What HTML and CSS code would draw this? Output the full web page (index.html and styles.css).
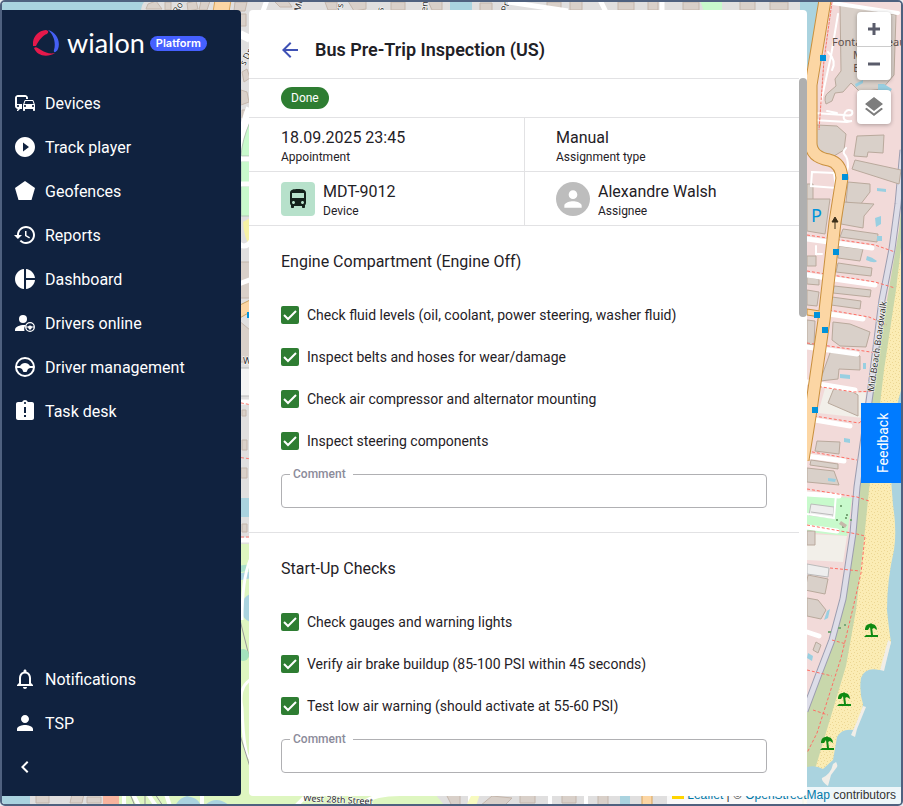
FILE: index.html
```
<!DOCTYPE html>
<html lang="en">
<head>
    <meta charset="UTF-8">
    <meta name="viewport" content="width=device-width, initial-scale=1.0">
    <title>Bus Pre-Trip Inspection (US)</title>
    <link rel="stylesheet" href="styles.css">
</head>
<body>
    <div class="app">
        <!-- map -->
        <svg class="map" viewBox="2 2 899 802" preserveAspectRatio="xMaxYMin slice" aria-hidden="true">
            <defs>
                <pattern id="sand" width="6" height="6" patternUnits="userSpaceOnUse">
                    <rect width="6" height="6" fill="#fbecb4"/>
                    <path d="M1 1h1v1h-1zM4 2h1v1h-1zM2 4h1v1h-1zM5 5h1v1h-1z" fill="#ecd794"/>
                </pattern>
                <g id="umbrella" fill="#0f8a12">
                    <path d="M-6 0C-6-4-4-6-1-6L0-7 1-6C4-6 6-3 6 0L3-2 1-1-1-3-3 0z"/>
                    <path d="M-1-3l2 0 1 8h5v2h-14l2-2h5z"/>
                </g>
            </defs>
            <rect width="903" height="806" fill="#e0dfdf"/>

            <!-- top edge -->
            <path d="M0 0h146q-5 4-5 12H0z" fill="#aad3df"/>
            <path d="M215 0h16l-2 12h-16z" fill="#fcd6a4" stroke="#d9a458"/>
            <g fill="#d9d0c9" stroke="#c4b6ab">
                <path d="M148 4l8-3 6 8h-16zM165 2h6v8h-6zM187 3l9-2 2 8-10 2zM201 1h9l-3 9h-8zM235 2h12l-2 9h-11zM274 1h14l4 6h-12zM325 2h12v8h-9zM348 1h18v8l-12 2zM391 2h14v8h-14zM428 1h14v9h-10zM480 3h12v8h-12zM547 2h14v8h-14zM570 1h12v9h-12zM618 2h16v8h-16zM648 1h10v9h-10zM683 2h16v8h-16zM740 1h15v9h-15zM770 2h18v8h-18z"/>
            </g>
            <path d="M450 0h22v12h-22zM800 0h16l-8 60h-8z" fill="#aad3df"/>
            <path d="M700 0h22v12h-18z" fill="#c8facc"/>
            <path d="M262 14l5-14M508 2l60 9M600 0l6 12M662 0v12" stroke="#fff" stroke-width="5" fill="none"/>
            <g class="map-street">
                <text transform="translate(178 14) rotate(-62)">Ro</text>
                <text transform="translate(300 12) rotate(-75)">Mi</text>
                <text transform="translate(342 12) rotate(-80)">rs</text>
                <text transform="translate(383 12) rotate(-80)">s</text>
                <text transform="translate(427 12) rotate(-85)">en</text>
                <text transform="translate(507 12) rotate(-75)">Pr</text>
            </g>

            <!-- gap between the sidebar and the panel -->
            <g fill="#d9d0c9" stroke="#c4b6ab">
                <path d="M238 14h8v12h-8zM242 72l5-3 3 9-6 4zM241 90l6 2 2 10-8 3zM242 110h5v8h-5zM238 262h12v36h-12zM238 320l12 10v32h-12zM242 410h4v6h-4zM242 440h5v10h-5zM241 468h6v10h-6zM242 524h5v8h-5z"/>
            </g>
            <path d="M240 34l10 5M250 108q-8 20-14 60" stroke="#fff" stroke-width="8" fill="none"/>
            <path d="M250 122q-8 18-9 34h9zM241 161h9v22h-9zM241 186h9v30h-9z" fill="#c8facc" stroke="#b5c8b7"/>
            <path d="M243 222l7-4v28q-6-8-7-24z" fill="#f7f2a5"/>
            <path d="M236 159h16M236 184h16M236 240q8 12 16 0M236 285l16-6M236 402h16M236 540h16" stroke="#fff" stroke-width="5" fill="none"/>
            <path d="M236 368h16v28h-16z" fill="#f4f4f4" stroke="#bbb"/>
            <path d="M238 306l12-6v12l-12 7z" fill="#fcd6a4" stroke="#c9a260"/>
            <path d="M247 312h5v6h-5z" fill="#0092da"/>
            <path d="M236 402l16 3M236 457l16 2M236 537h16" stroke="#fa7b72" stroke-dasharray="3 2" fill="none"/>
            <path d="M236 498h16v19h-16z" fill="#aad3df"/>
            <path d="M236 544h16v262h-16z" fill="#def6c0"/>
            <path d="M236 566l16-2v6l-16 3z" fill="#aae0cb"/>
            <path d="M236 574l16-3v7l-16 3zM250 594q-9 4-9 14t9 14z" fill="#aad3df"/>
            <path d="M250 560q-8 20-8 60M250 680q-12 8-8 28 2 50 8 50" stroke="#fff" stroke-width="3" fill="none"/>
            <path d="M240 620l10 40M240 735l10 32" stroke="#999"/>
            <circle cx="243" cy="655" r="6" fill="#a3e2bd"/>
            <g class="map-street">
                <text transform="translate(245 66) rotate(-62)">s Dr</text>
                <text x="243" y="364">W 41st</text>
            </g>

            <!-- bottom edge -->
            <path d="M0 794h30v12H0zM620 794h10v12h-10z" fill="#aad3df"/>
            <path d="M103 794h16v12h-16z" fill="#f8b39d"/>
            <path d="M119 794h316l10 12H119z" fill="#def6c0"/>
            <path d="M175 806q4-8 12-10 12 2 14 10zM204 806q12-12 26 0z" fill="#aad3df"/>
            <path d="M36 795h13v8H36zM72 794h12l-2 9H70zM87 797h14v6H87zM446 794h14v12h-8zM480 806l12-10 20 2-8 8zM520 795h15v8h-15zM562 795h14v8h-14zM598 794h10v11h-10z" fill="#d9d0c9" stroke="#c4b6ab"/>
            <path d="M124 794v12M133 794l6 12M148 794l8 12M166 794l4 12M202 794v12M296 806l10-10M400 794q-30 0-40 12M470 794v12M550 794v12M586 794v12" stroke="#fff" stroke-width="4" fill="none"/>
            <path d="M130 794l5 12M145 794v12M155 794l8 12" stroke="#999"/>
            <path d="M642 794h10v12h-10z" fill="#fcd6a4" stroke="#d9a458"/>
            <path d="M472 794h8l-4 12h-10z" fill="#f7fabf"/>
            <text class="map-street" transform="translate(303 801) rotate(3)">West 28th Street</text>

            <!-- beach side -->
            <path d="M807 0h96v806h-96z" fill="#f2dad9"/>
            <path d="M807 0h14l-14 70z" fill="#aad3df"/>
            <path d="M807 494l45 4-5 38-40-4z" fill="#c8facc"/>
            <path d="M807 534l40 2-4 26-36-2zM826 385l40 8-3 25-45-5z" fill="#f2efe9"/>
            <path d="M903 190l-4 40-12 70-18 100-13 95-12 100-10 42-18 40-14 38v98h116V190z" fill="#c8d7ab"/>
            <path d="M903 230l-7 60-12 80-7 60-8 60-5 50-8 70-10 56-12 40-18 60-12 25v20h86l16-190z" fill="url(#sand)"/>
            <path d="M903 385q-6 15-10 45-4 35 0 75 4 25 1 45-7 30-7 60 2 20 4 32l-5 18q-2 10-7 10-14-3-18 8-2 14 2 26-1 15-10 26-11-2-16 7-2 12-4 23l-10 9q-7-4-16-2v40h96z" fill="#aad3df"/>
            <path d="M888 640l3 2-7 29-4-1zM863 706l3 1-9 22-2 8-4-2 4-9zM836 762q2 3 1 5l-6 8-3 11q-7-5-6-8 9-4 11-14z" fill="#f1eee8"/>
            <path d="M903 150l-5 54-6 45-10 51-11 87-14 100-4 46-10 66-11 41-15 39-12 32" fill="none" stroke="#9b9caf" stroke-width="7"/>
            <path d="M903 150l-5 54-6 45-10 51-11 87-14 100-4 46-10 66-11 41-15 39-12 32" fill="none" stroke="#dddde8" stroke-width="5"/>

            <g fill="#d9d0c9" stroke="#b9a99c">
                <path d="M840 5l32 5 24 5-2 60-12 14-22 3-9-9-8 9-8 1-3 8-6 3q-3-8 3-12l7-6-1-7 6-8z"/>
                <path d="M817 125l20 1 9 8-2 16-10 6-16-1-5-6 1-18z"/>
                <path d="M857 136l27-1-1 18-15-1-1 5-13-1z"/>
                <path d="M855 160l46 10-2 14-47-15zM848 182l22 2v8l-10 13-14-3zM807 184h6v16h-6z"/>
                <path d="M807 199h23l-5 35-18-3zM843 202l31 2-10 12-1 12-22-4zM843 229l35 5-1 8-37-5zM839 246l24 3-3 12-22-3zM838 263l34 5-1 8-35-4zM834 286l37 4-1 7-37-4zM832 297l29 4-1 8-29-4z"/>
                <path d="M807 256h9v10h-9zM807 277l12 2v6l-12-1zM807 290l12 2-2 14-10-1z"/>
                <path d="M833 322l17 2 20 8-4 15-26-1-8-6zM807 320l8 1-1 24-7-1zM831 350l7 1 22 5v14l-21-1-1 10-18 2zM834 388l17 3 7 4v21l-30-13z"/>
                <path d="M817 441l23 1-1 12-24-3zM811 460l27 4v5l-28-4zM807 468l27 3 5 14-32-3zM807 531h8v14h-8zM808 575l20 4-3 15-20-4zM807 598l11 2 8 10-5 9-14-3zM816 642l5 3-3 8-5-3z"/>
            </g>
            <path d="M811 504l23 3-1 11-24-3zM811 512l22 3" fill="#ededed" stroke="#bbb"/>
            <path d="M807 564l22 4-1 9-21-3z" fill="#eee" stroke="#bbb"/>
            <path d="M878 84l6 0 8 5-2 3h-12zM855 84l8-4v3l-7 4zM875 218l6-2v8l-5 3zM877 236h5v5h-5zM867 256q5 1 10 5-2 3-11-1zM840 374l10 1v4l-10-1zM863 363h3v6h-3zM844 438l6 1v4l-6-1zM828 478l8 1-1 3-7-1zM827 611l3-2-2 9-4 2zM808 653l5 3-1 5-5-3zM877 188l9 1v3l-9-1z" fill="#99cfe1"/>

            <!-- side streets -->
            <g stroke="#fff" stroke-width="5" stroke-linecap="round" fill="none">
                <path d="M807 239l65 9M807 275l68 10M829 314l34 5M807 347l50 7M807 382l48 8M815 420l35 6M807 456l37 5M807 494l32 2M807 527l30 4M807 632l12 4"/>
                <g stroke-width="2">
                    <path stroke-width="4" d="M833 3l65 10"/>
                    <path d="M838 14l-7 42-10 46M828 52q9 9 4 18M814 113l30 2q10 2 8-4-6-3-8 4t8 6l-5 1-34-2M827 111l10 2"/>
                    <path d="M812 172l22 1 2 15-25-2zM846 148q-4 4-1 7t3 12l-2 8M839 228v10M836 494l-2 24-27-4M816 246v8h6"/>
                </g>
            </g>
            <g stroke="#ff6f65" stroke-width="1" stroke-dasharray="3 2" fill="none">
                <path d="M807 235l68 10 20 7M807 271l68 11 20 6M829 310l40 7 18 8M807 343l50 7 20 3M809 385l45 7 20-1M814 416l45 7 5-4M807 451l50 9M807 489l50 8 12 4M807 525l50 9 8 2-4 37-8 35-12 50-24 75-10 20M830 568l30 3M807 670l25 6M813 710l15 5M832 640l14 4"/>
            </g>

            <!-- main road -->
            <path d="M825 0l-14 85v58q0 14 18 17 12 3 13 18l-7 44-11 98-13 90-8 50" fill="none" stroke="#c9903d" stroke-width="13"/>
            <path d="M807 309l13 2v6l-13-2z" fill="#fcd6a4" stroke="#c9903d"/>
            <path d="M825 0l-14 85v58q0 14 18 17 12 3 13 18l-7 44-11 98-13 90-8 50" fill="none" stroke="#fcd6a4" stroke-width="11"/>
            <path d="M832 2l-8 58-5 70" fill="none" stroke="#f7756a" stroke-dasharray="3 1"/>
            <path d="M835 229v-9M835 217l-3 5h6z" stroke="#3d301b" fill="#3d301b"/>
            <path d="M820 55h6v6h-6zM842 174h6v6h-6zM833 249h6v6h-6zM814 312h6v6h-6zM822 327h6v6h-6zM812 407h6v6h-6z" fill="#0092da"/>
            <path d="M840 506h2M846 515h2M842 527h2M850 520h2M828 632h3M838 628h3M844 625h2M845 518h2M836 520h2" stroke="#79a878" stroke-width="2"/>
            <path d="M841 521l6 4-2 3-6-4z" fill="#c6b8aa"/>
            <use href="#umbrella" x="871" y="630"/>
            <use href="#umbrella" x="844" y="699"/>
            <use href="#umbrella" x="827" y="743"/>
            <text class="map-parking" x="811" y="222">P</text>
            <g class="map-place">
                <text x="869" y="46">Fontainebleau</text>
                <text x="869" y="59">Miami</text>
                <text x="869" y="72">Beach</text>
            </g>
            <text class="map-street" transform="translate(874 392) rotate(-82)">Mid Beach Boardwalk</text>
        </svg>
        <div class="attribution">
            <svg viewBox="0 0 12 8" width="12" height="8"><path fill="#4c7be1" d="M0 0h12v4H0z"/><path fill="#ffd500" d="M0 4h12v4H0z"/></svg>
            <a href="#">Leaflet</a> | © <a href="#">OpenStreetMap</a> contributors
        </div>

        <!-- sidebar -->
        <aside class="sidebar">
            <div class="logo">
                <svg class="logo-mark" viewBox="0 0 26 26">
                    <path fill="#e5194b" d="M13 0q4 1 1 4C10 5 6 10 3 16l-3 0C-1 8 4 1 13 0z"/>
                    <path fill="#4560f5" d="M15 0c8 2 13 11 10 19-2 4-5 4-4 1C23 13 21 5 15 0z"/>
                    <path fill="#e5194b" d="M1 18c2-2 4 0 7 2 5 3 9 4 14 3C14 28 4 26 1 18z"/>
                </svg>
                <span class="logo-name">wialon</span>
                <span class="logo-badge">Platform</span>
            </div>
            <nav class="menu">
                <a class="menu-item" href="#">
                    <svg viewBox="0 0 24 24"><path d="M12 4H5C3.340 4 2 5.340 2 7v8c0 1.660 1.340 3 3 3l-1 1v1h1l2-2.030L9 18v-5H4V5.980L13 6v2h2V7c0-1.660-1.340-3-3-3zM5 14c.550 0 1 .450 1 1s-.450 1-1 1-1-.450-1-1 .450-1 1-1zm15.570-4.340c-.140-.400-.520-.660-.970-.660h-7.190c-.460 0-.830.260-.980.660L10 13.770l.010 5.510c0 .380.310.720.690.720h.620c.380 0 .680-.380.680-.760V18h8v1.240c0 .380.310.760.690.760h.610c.380 0 .690-.340.690-.720l.010-1.370v-4.140l-1.430-4.110zm-8.160.340h7.190l1.030 3h-9.250l1.030-3zM12 16c-.550 0-1-.450-1-1s.450-1 1-1 1 .450 1 1-.450 1-1 1zm8 0c-.550 0-1-.450-1-1s.450-1 1-1 1 .450 1 1-.450 1-1 1z"/></svg>
                    Devices
                </a>
                <a class="menu-item" href="#">
                    <svg viewBox="0 0 24 24"><path d="M12 2C6.480 2 2 6.480 2 12s4.480 10 10 10 10-4.480 10-10S17.520 2 12 2zM10 16.500v-9l6 4.500-6 4.500z"/></svg>
                    Track player
                </a>
                <a class="menu-item" href="#">
                    <svg viewBox="0 0 24 24"><path d="M2 9l3.500 12h13L22 9 12 2z"/></svg>
                    Geofences
                </a>
                <a class="menu-item" href="#">
                    <svg viewBox="0 0 24 24"><path d="M13 3c-4.970 0-9 4.030-9 9H1l3.890 3.890.070.140L9 12H6c0-3.870 3.130-7 7-7s7 3.130 7 7-3.130 7-7 7c-1.930 0-3.680-.790-4.940-2.060l-1.420 1.420C8.270 19.990 10.510 21 13 21c4.970 0 9-4.030 9-9s-4.030-9-9-9zm-1 5v5l4.280 2.540.720-1.210-3.500-2.080V8H12z"/></svg>
                    Reports
                </a>
                <a class="menu-item" href="#">
                    <svg viewBox="0 0 24 24"><path d="M11 2v20c-5.070-.500-9-4.790-9-10s3.930-9.500 9-10zm2.030 0v8.990H22c-.470-4.740-4.240-8.520-8.970-8.990zm0 11.010V22c4.740-.470 8.500-4.250 8.970-8.990h-8.970z"/></svg>
                    Dashboard
                </a>
                <a class="menu-item" href="#">
                    <svg viewBox="0 0 24 24">
                        <circle cx="10" cy="8" r="4"/>
                        <path d="M11 14c-4 0-9 1.500-9 5v1h9.500a6 6 0 0 1 1.500-6z"/>
                        <circle cx="17" cy="16" r="4.300" fill="none" stroke="#fff" stroke-width="1.300"/>
                        <path d="M13 15.500h2q2-2 4 0h2v1h-2l-1.200 2h-1.600l-1.200-2h-2z"/>
                    </svg>
                    Drivers online
                </a>
                <a class="menu-item" href="#">
                    <svg viewBox="0 0 24 24">
                        <circle cx="12" cy="12" r="9" fill="none" stroke="#fff" stroke-width="2"/>
                        <path d="M3 11h4c1-2 3-3 5-3s4 1 5 3h4v2h-4l-2 1-1.500 3h-3L9 14l-2-1H3z"/>
                    </svg>
                    Driver management
                </a>
                <a class="menu-item" href="#">
                    <svg viewBox="0 0 24 24"><path d="M19 3h-4.180C14.400 1.840 13.300 1 12 1c-1.300 0-2.400.840-2.820 2H5c-1.100 0-2 .900-2 2v14c0 1.100.900 2 2 2h14c1.100 0 2-.900 2-2V5c0-1.100-.900-2-2-2zm-6 15h-2v-2h2v2zm0-4h-2V8h2v6zm-1-9c-.550 0-1-.450-1-1s.450-1 1-1 1 .450 1 1-.450 1-1 1z"/></svg>
                    Task desk
                </a>
            </nav>
            <div class="menu">
                <a class="menu-item" href="#">
                    <svg viewBox="0 0 24 24"><path d="M12 22c1.100 0 2-.900 2-2h-4c0 1.100.890 2 2 2zm6-6v-5c0-3.070-1.640-5.640-4.500-6.320V4c0-.830-.670-1.500-1.500-1.500s-1.500.670-1.500 1.500v.680C7.630 5.360 6 7.920 6 11v5l-2 2v1h16v-1l-2-2zm-2 1H8v-6c0-2.480 1.510-4.500 4-4.500s4 2.020 4 4.500v6z"/></svg>
                    Notifications
                </a>
                <a class="menu-item" href="#">
                    <svg viewBox="0 0 24 24"><path d="M12 12c2.210 0 4-1.790 4-4s-1.790-4-4-4-4 1.790-4 4 1.790 4 4 4zm0 2c-2.670 0-8 1.340-8 4v2h16v-2c0-2.660-5.330-4-8-4z"/></svg>
                    TSP
                </a>
                <button class="menu-item" type="button" aria-label="Collapse menu">
                    <svg viewBox="0 0 24 24"><path d="M15.410 7.410L14 6l-6 6 6 6 1.410-1.410L10.830 12z"/></svg>
                </button>
            </div>
        </aside>

        <!-- panel -->
        <main class="panel">
            <header class="panel-header">
                <button class="back" type="button" aria-label="Back">
                    <svg viewBox="0 0 24 24"><path d="M20 11H7.830l5.590-5.590L12 4l-8 8 8 8 1.410-1.410L7.830 13H20v-2z"/></svg>
                </button>
                <h1>Bus Pre-Trip Inspection (US)</h1>
            </header>
            <div class="panel-body">
                <div class="content">
                    <div class="status"><span class="chip">Done</span></div>
                    <div class="info">
                        <div class="info-cell">
                            <div>
                                <div class="info-value">18.09.2025 23:45</div>
                                <div class="info-label">Appointment</div>
                            </div>
                        </div>
                        <div class="info-cell">
                            <div>
                                <div class="info-value">Manual</div>
                                <div class="info-label">Assignment type</div>
                            </div>
                        </div>
                        <div class="info-cell">
                            <span class="device-icon">
                                <svg viewBox="0 0 24 24"><path d="M4 16c0 .880.390 1.670 1 2.220V20c0 .550.450 1 1 1h1c.550 0 1-.450 1-1v-1h8v1c0 .550.450 1 1 1h1c.550 0 1-.450 1-1v-1.780c.610-.550 1-1.340 1-2.220V6c0-3.500-3.580-4-8-4s-8 .500-8 4v10zm3.500 1c-.830 0-1.500-.670-1.500-1.500S6.670 14 7.500 14s1.500.670 1.500 1.500S8.330 17 7.500 17zm9 0c-.830 0-1.500-.670-1.500-1.500s.670-1.500 1.500-1.500 1.500.670 1.500 1.500-.670 1.500-1.500 1.500zm1.500-6H6V6h12v5z"/></svg>
                            </span>
                            <div>
                                <div class="info-value">MDT-9012</div>
                                <div class="info-label">Device</div>
                            </div>
                        </div>
                        <div class="info-cell">
                            <span class="avatar">
                                <svg viewBox="0 0 24 24"><path d="M12 12c2.210 0 4-1.790 4-4s-1.790-4-4-4-4 1.790-4 4 1.790 4 4 4zm0 2c-2.670 0-8 1.340-8 4v2h16v-2c0-2.660-5.330-4-8-4z"/></svg>
                            </span>
                            <div>
                                <div class="info-value">Alexandre Walsh</div>
                                <div class="info-label">Assignee</div>
                            </div>
                        </div>
                    </div>

                    <section class="section">
                        <h2>Engine Compartment (Engine Off)</h2>
                        <label class="check"><input type="checkbox" checked>Check fluid levels (oil, coolant, power steering, washer fluid)</label>
                        <label class="check"><input type="checkbox" checked>Inspect belts and hoses for wear/damage</label>
                        <label class="check"><input type="checkbox" checked>Check air compressor and alternator mounting</label>
                        <label class="check"><input type="checkbox" checked>Inspect steering components</label>
                        <div class="field">
                            <label for="comment-engine">Comment</label>
                            <input id="comment-engine" type="text">
                        </div>
                    </section>
                    <section class="section">
                        <h2>Start-Up Checks</h2>
                        <label class="check"><input type="checkbox" checked>Check gauges and warning lights</label>
                        <label class="check"><input type="checkbox" checked>Verify air brake buildup (85-100 PSI within 45 seconds)</label>
                        <label class="check"><input type="checkbox" checked>Test low air warning (should activate at 55-60 PSI)</label>
                        <div class="field">
                            <label for="comment-startup">Comment</label>
                            <input id="comment-startup" type="text">
                        </div>
                    </section>
                </div>
                <div class="scrollbar"><div class="scrollbar-thumb"></div></div>
            </div>
        </main>

        <!-- map controls -->
        <div class="controls">
            <div class="control">
                <button type="button" aria-label="Zoom in"><svg viewBox="0 0 14 14" width="14" height="14"><path d="M1 7h12M7 1v12"/></svg></button>
                <button type="button" aria-label="Zoom out"><svg viewBox="0 0 14 14" width="14" height="14"><path d="M1 7h12"/></svg></button>
            </div>
            <div class="control">
                <button class="layers" type="button" aria-label="Layers"><svg viewBox="0 0 24 24" width="24" height="24"><path d="M11.990 18.540l-7.370-5.730L3 14.070l9 7 9-7-1.630-1.270-7.380 5.740zM12 16l7.360-5.730L21 9l-9-7-9 7 1.630 1.270L12 16z"/></svg></button>
            </div>
        </div>
        <button class="feedback" type="button">Feedback</button>
    </div>
</body>
</html>
```
FILE: styles.css
```
* {
    box-sizing: border-box;
}

body {
    margin: 0;
    background-color: #e8ebf0;
    color: #1f2126;
    font-family: Roboto, "Liberation Sans", sans-serif;
    font-size: 14px;
}

button {
    padding: 0;
    border: 0;
    background: none;
    font: inherit;
    cursor: pointer;
}

.app {
    position: relative;
    display: flex;
    gap: 8px;
    height: 100vh;
    padding: 8px 94px 8px 0;
    border: 2px solid #4f617f;
    border-radius: 5px;
    overflow: hidden;
}

/* map */

.map {
    position: absolute;
    top: 0;
    left: 0;
    width: 100%;
    height: 100%;
}

.map-street {
    fill: #2b2b2b;
    font-family: "Noto Sans", sans-serif;
    font-size: 9px;
    stroke: #fff;
    stroke-width: 1px;
    paint-order: stroke;
}

.map-place {
    fill: #5c4f4a;
    font-family: "Noto Sans", sans-serif;
    font-size: 11px;
    text-anchor: middle;
}

.map-parking {
    fill: #0092da;
    font-family: "Noto Sans", sans-serif;
    font-size: 18px;
}

.attribution {
    position: absolute;
    right: 0;
    bottom: 0;
    padding: 0 5px;
    background-color: rgb(255 255 255 / 0.8);
    color: #333;
    font: 12px/17px "Liberation Sans", sans-serif;
    white-space: nowrap;
}

.attribution a {
    color: #0078a8;
    text-decoration: none;
}

/* sidebar */

.sidebar {
    position: relative;
    display: flex;
    flex: none;
    flex-direction: column;
    width: 239px;
    padding: 16px 11px 7px;
    border-radius: 0 4px 4px 0;
    background-color: #10223f;
    color: #fff;
}

.logo {
    display: flex;
    align-items: center;
    height: 34px;
    margin: 0 0 21px 20px;
}

.logo-mark {
    width: 26px;
    height: 26px;
}

.logo-name {
    margin: 0 5px 0 8px;
    font: 27px/34px Lato, sans-serif;
}

.logo-badge {
    padding: 0 6px;
    border-radius: 8px;
    background-color: #4560ff;
    font: 600 11px/15px Inter, sans-serif;
}

.menu:last-child {
    margin-top: auto;
}

.menu-item {
    display: flex;
    align-items: center;
    gap: 8px;
    height: 44px;
    color: #fff;
    font-size: 16px;
    text-decoration: none;
}

.menu-item svg {
    width: 24px;
    height: 24px;
    fill: #fff;
}

/* panel */

.panel {
    position: relative;
    display: flex;
    flex: 1;
    flex-direction: column;
    min-width: 0;
    border-radius: 4px;
    background-color: #fff;
    overflow: hidden;
}

.panel-header {
    display: flex;
    flex: none;
    align-items: center;
    gap: 13px;
    height: 68px;
    padding: 12px 29px 0;
}

.back,
.back svg {
    display: block;
    width: 24px;
    height: 24px;
    fill: #3f51b5;
}

h1 {
    margin: 0;
    font-size: 18px;
    font-weight: 600;
    line-height: 24px;
}

.panel-body {
    display: flex;
    flex: 1;
    min-height: 0;
}

.content {
    flex: 1;
    min-width: 0;
    overflow: hidden;
}

.scrollbar {
    width: 8px;
}

.scrollbar-thumb {
    height: 33.3%;
    border-radius: 4px;
    background-color: #afafaf;
}

.status {
    padding: 8px 32px;
    border-top: 1px solid #e2e2e4;
    border-bottom: 1px solid #e2e2e4;
}

.chip {
    display: block;
    width: fit-content;
    padding: 0 10px;
    border-radius: 11px;
    background-color: #2e7d32;
    color: #fff;
    font-size: 12px;
    line-height: 22px;
}

.info {
    display: grid;
    grid-template-columns: 1fr 1fr;
}

.info-cell {
    display: flex;
    align-items: center;
    gap: 8px;
    height: 54px;
    padding: 1px 32px 0;
    border-bottom: 1px solid #e2e2e4;
}

.info-cell:nth-child(even) {
    padding-left: 31px;
    border-left: 1px solid #e2e2e4;
}

.info-value {
    font-size: 16px;
    line-height: 24px;
}

.info-label {
    font-size: 12px;
    line-height: 14px;
}

.device-icon,
.avatar {
    display: flex;
    align-items: center;
    justify-content: center;
    width: 34px;
    height: 34px;
}

.device-icon {
    border-radius: 4px;
    background-color: #b7e1cb;
}

.device-icon svg {
    width: 24px;
    height: 24px;
    fill: #14211b;
}

.avatar {
    border-radius: 50%;
    background-color: #bdbdbd;
}

.avatar svg {
    width: 26px;
    height: 26px;
    fill: #fff;
}

.section {
    padding: 24px 32px;
    border-bottom: 1px solid #e2e2e4;
}

h2 {
    margin: 0 0 20px;
    font-size: 16px;
    font-weight: 400;
    line-height: 24px;
}

.check {
    display: flex;
    align-items: center;
    gap: 8px;
    height: 42px;
}

.check input {
    flex: none;
    width: 18px;
    height: 18px;
    margin: 0;
    border-radius: 2px;
    background: #2e7d32 url("data:image/svg+xml,%3Csvg xmlns='http://www.w3.org/2000/svg' viewBox='0 0 18 18'%3E%3Cpath d='M3 9l4 4 8-8' fill='none' stroke='%23fff' stroke-width='2'/%3E%3C/svg%3E");
    appearance: none;
}

.field {
    position: relative;
    margin-top: 12px;
}

.field label {
    position: absolute;
    top: -8px;
    left: 9px;
    padding: 0 7px 0 3px;
    background-color: #fff;
    color: #8b8b9a;
    font-size: 12px;
    font-weight: 500;
    line-height: 16px;
}

.field input {
    display: block;
    width: 100%;
    height: 34px;
    padding: 0 12px;
    border: 1px solid #b0b0b3;
    border-radius: 4px;
    background-color: #fff;
    font: inherit;
}

/* map controls */

.controls {
    position: absolute;
    top: 10px;
    right: 10px;
    display: flex;
    flex-direction: column;
    gap: 10px;
}

.control {
    border-radius: 4px;
    background-color: #fff;
    box-shadow: 0 1px 4px rgb(0 0 0 / 0.3);
}

.control button {
    display: flex;
    align-items: center;
    justify-content: center;
    width: 34px;
    height: 34px;
}

.control button + button {
    border-top: 1px solid #ccc;
}

.control path {
    fill: none;
    stroke: #5a5c6b;
    stroke-width: 3px;
}

.control .layers path {
    fill: #7d7d7d;
    stroke: none;
}

.feedback {
    position: absolute;
    top: 50%;
    right: 0;
    width: 40px;
    height: 80px;
    padding-right: 4px;
    background-color: #007bff;
    color: #fff;
    font-size: 14px;
    line-height: 36px;
    writing-mode: vertical-rl;
    transform: rotate(180deg);
}
```
